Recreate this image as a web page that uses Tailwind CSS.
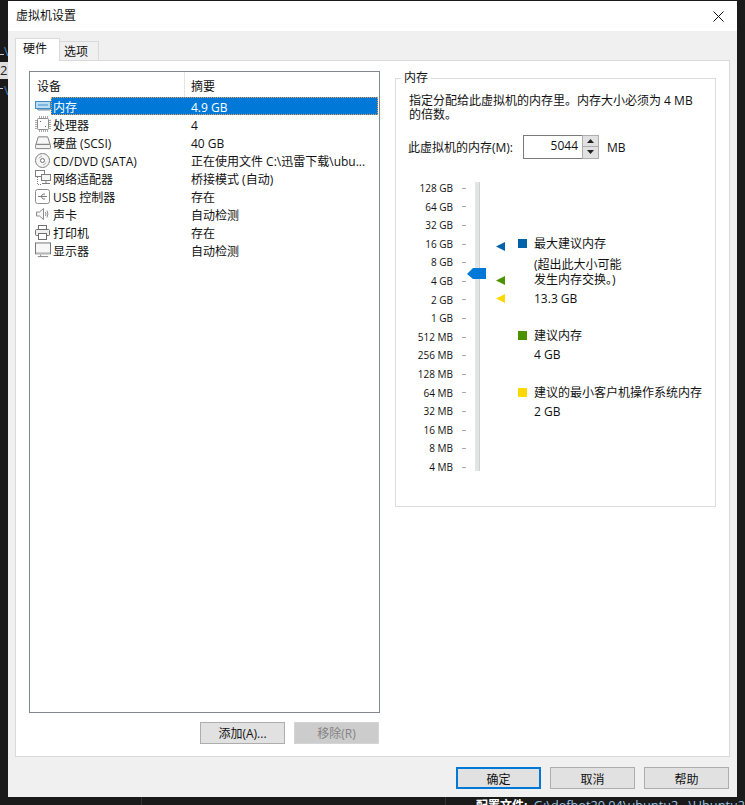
<!DOCTYPE html>
<html lang="en">
<head>
    <meta charset="UTF-8">
    <meta name="viewport" content="width=device-width, initial-scale=1.0">
    <title>虚拟机设置</title>
    <script src="https://cdn.jsdelivr.net/npm/@tailwindcss/browser@4"></script>
</head>
<body class="bg-[#1a1a1a] h-[805px] w-[745px] overflow-hidden relative font-['Open_Sans','Noto_Sans_CJK_SC',sans-serif] text-[12px] leading-[18px] text-[#111]">

    <!-- bits of the desktop behind the dialog -->
    <div class="absolute left-0 top-[44px] w-[8px] h-[14px] overflow-hidden pl-[4px] text-[#3f7fb5] text-[13px] leading-[14px]">V</div>
    <div class="absolute left-0 top-[54px] w-[4px] h-px bg-[#ccc]"></div>
    <div class="absolute left-0 top-[62px] w-[8px] h-[17px] bg-[#dddddd] overflow-hidden text-[#222] text-[13px] leading-[17px]">2</div>
    <div class="absolute left-0 top-[83px] w-[8px] h-[14px] overflow-hidden pl-[4px] text-[#3f7fb5] text-[13px] leading-[14px]">V</div>
    <div class="absolute left-0 top-[88px] w-[3px] h-px bg-[#ccc]"></div>
    <div class="absolute left-[141px] top-[797px] w-px h-[8px] bg-[#333]"></div>
    <div class="absolute left-[445px] top-[797px] w-px h-[8px] bg-[#333]"></div>
    <div class="absolute left-[476px] top-[797px] w-[269px] h-[8px] overflow-hidden text-[12.7px] leading-[16px] whitespace-nowrap text-[#9cc4e4]"><b class="text-white text-[12px] mr-[3px]">配置文件:</b> G:\dofbot20.04\ubuntu2...\Ubuntu20</div>

    <!-- window -->
    <div class="absolute left-[8px] top-[1px] w-[729px] h-[796px] bg-[#f0f0f0] flex flex-col">
        <div class="h-[30px] bg-white flex items-center justify-between pl-[8px] pr-[13px] shrink-0">
            <span>虚拟机设置</span>
            <svg width="11" height="11" viewBox="0 0 11 11" fill="none" stroke="#111" stroke-width="1"><path d="M0.5 0.5L10.5 10.5M10.5 0.5L0.5 10.5"/></svg>
        </div>

        <!-- tabs -->
        <div class="flex items-end pl-[7px] h-[30px] shrink-0 relative z-10">
            <div class="w-[45px] h-[23px] bg-white border border-[#d9d9d9] border-b-0 pl-[7px] pt-[1px]">硬件</div>
            <div class="w-[39px] h-[19px] mb-[1px] bg-[#f0f0f0] border border-[#d9d9d9] border-l-0 border-b-0 pl-[4px] leading-[19px]">选项</div>
        </div>

        <div class="mx-[7px] h-[697px] bg-white border border-[#d9d9d9] -mt-[1px] flex pl-[13px] pt-[10px] gap-[15px]">
            <!-- left column -->
            <div class="w-[351px] flex flex-col">
                <div class="h-[642px] border border-[#828790] bg-white flex flex-col leading-[21px]">
                    <div class="flex h-[25px] shrink-0 items-center">
                        <div class="w-[155px] h-full pl-[7px] border-r border-[#e5e5e5] leading-[29px]">设备</div>
                        <div class="pl-[6px] leading-[29px] h-full">摘要</div>
                    </div>

                    <div class="flex h-[18px]">
                        <div class="w-[21px] flex items-center pl-[5px]"><svg width="16" height="10" viewBox="0 0 16 10"><rect x="0.5" y="0.5" width="15" height="7" fill="#bcdcf3" stroke="#3d8cc6"/><path d="M3 3h10v2H3z" fill="#7fb6e0"/><path d="M2 8.5H16" stroke="#8ea7b8"/><path d="M3 9.5H15" stroke="#c4ccd2"/></svg></div>
                        <div class="w-[327px] flex bg-[#0078d7] text-white outline-1 -outline-offset-1 outline-dotted outline-[#e8a04c]">
                            <div class="w-[140px] pl-[2px]">内存</div><div>4.9 GB</div>
                        </div>
                    </div>
                    <div class="flex h-[18px]">
                        <div class="w-[21px] flex items-center pl-[5px]"><svg width="16" height="16" viewBox="0 0 16 16" fill="none"><rect x="2.5" y="2.5" width="11" height="11" rx="1" fill="#fbfbfb" stroke="#8c8c8c"/><path d="M4.5 0V2M6.5 0V2M8.5 0V2M10.5 0V2M12.5 0V2M4.5 14V16M6.5 14V16M8.5 14V16M10.5 14V16M12.5 14V16M0 4.5H2M0 6.5H2M0 8.5H2M0 10.5H2M0 12.5H2M14 4.5H16M14 6.5H16M14 8.5H16M14 10.5H16M14 12.5H16" stroke="#a8a8a8"/><path d="M5 5h1v1H5zM10 10h1v1h-1z" fill="#666"/></svg></div>
                        <div class="w-[140px] pl-[2px]">处理器</div><div>4</div>
                    </div>
                    <div class="flex h-[18px]">
                        <div class="w-[21px] flex items-center pl-[5px]"><svg width="17" height="15" viewBox="0 0 17 15" fill="none"><path d="M3.5 1.5H13.5L16 9.5H1Z" fill="#f7f7f7" stroke="#7a7a7a"/><rect x="0.5" y="9.5" width="16" height="4.5" rx="1" fill="#f2f2f2" stroke="#7a7a7a"/></svg></div>
                        <div class="w-[140px] pl-[2px]">硬盘 (SCSI)</div><div>40 GB</div>
                    </div>
                    <div class="flex h-[18px]">
                        <div class="w-[21px] flex items-center pl-[5px]"><svg width="15" height="15" viewBox="0 0 15 15" fill="none"><circle cx="7.5" cy="7.5" r="7" fill="#f5f5f5" stroke="#808080"/><path d="M4 5.5A4.5 4.5 0 0 1 7 3M11 9.5A4.5 4.5 0 0 1 8 12" stroke="#b0b0b0"/><circle cx="7.5" cy="7.5" r="2" fill="#fff" stroke="#6e6e6e"/></svg></div>
                        <div class="w-[140px] pl-[2px]">CD/DVD (SATA)</div><div class="whitespace-nowrap">正在使用文件 C:\迅雷下载\ubu...</div>
                    </div>
                    <div class="flex h-[18px]">
                        <div class="w-[21px] flex items-center pl-[5px]"><svg width="16" height="16" viewBox="0 0 16 16" fill="none" stroke="#7d7d7d"><rect x="0.5" y="0.5" width="9" height="6" fill="#fff"/><rect x="6.5" y="4.5" width="9" height="6" fill="#f4f4f4"/><path d="M11 10.5V13M7 13.5H15"/><path d="M2.5 7V14.5H6" stroke-dasharray="1 1"/></svg></div>
                        <div class="w-[140px] pl-[2px]">网络适配器</div><div>桥接模式 (自动)</div>
                    </div>
                    <div class="flex h-[18px]">
                        <div class="w-[21px] flex items-center pl-[5px]"><svg width="15" height="15" viewBox="0 0 15 15" fill="none"><rect x="0.5" y="0.5" width="14" height="14" rx="2" fill="#fff" stroke="#8c8c8c"/><path d="M3 7.5H12M6 7.5L8 5H10M6 7.5L8 10H10" stroke="#7a7a7a"/></svg></div>
                        <div class="w-[140px] pl-[2px]">USB 控制器</div><div>存在</div>
                    </div>
                    <div class="flex h-[18px]">
                        <div class="w-[21px] flex items-center pl-[6px]"><svg width="13" height="14" viewBox="0 0 13 14" fill="none" stroke="#8c8c8c"><path d="M0.5 5H3.5L7.5 1.5V12.5L3.5 9H0.5Z" fill="#f6f6f6"/><path d="M9.5 5Q10.5 7 9.5 9M11 3.5Q12.8 7 11 10.5"/></svg></div>
                        <div class="w-[140px] pl-[2px]">声卡</div><div>自动检测</div>
                    </div>
                    <div class="flex h-[18px]">
                        <div class="w-[21px] flex items-center pl-[5px]"><svg width="15" height="15" viewBox="0 0 15 15" fill="none" stroke="#6e6e6e"><rect x="3.5" y="0.5" width="8" height="4" fill="#fff"/><rect x="0.5" y="4.5" width="14" height="6" rx="1" fill="#f0f0f0"/><rect x="3.5" y="8.5" width="8" height="6" fill="#fff"/></svg></div>
                        <div class="w-[140px] pl-[2px]">打印机</div><div>存在</div>
                    </div>
                    <div class="flex h-[18px]">
                        <div class="w-[21px] flex items-center pl-[5px]"><svg width="17" height="16" viewBox="0 0 17 16" fill="none"><rect x="0.5" y="0.5" width="16" height="11.5" fill="#f7f7f7" stroke="#707070"/><path d="M1 11.5H16" stroke="#b8b8b8" stroke-width="2"/><path d="M6 13V14.5M3 15H14" stroke="#808080"/></svg></div>
                        <div class="w-[140px] pl-[2px]">显示器</div><div>自动检测</div>
                    </div>
                </div>

                <div class="flex justify-end gap-[9px] mt-[9px] pr-[1px]">
                    <div class="w-[85px] h-[22px] bg-[#e1e1e1] border border-[#adadad] text-center leading-[22px]">添加(A)...</div>
                    <div class="w-[85px] h-[22px] bg-[#cccccc] border border-[#d4d4d4] text-[#838383] text-center leading-[22px]">移除(R)</div>
                </div>
            </div>

            <!-- memory group -->
            <div class="w-[321px] h-[429px] mt-[7px] border border-[#dcdcdc] relative">
                <span class="absolute left-[5px] -top-[8px] bg-white px-[3px] leading-[14px]">内存</span>
                <div class="pl-[13px] pt-[15px] pr-[10px] leading-[14px]">指定分配给此虚拟机的内存里。内存大小必须为 4 MB<br>的倍数。</div>
                <div class="flex items-center pl-[12px] mt-[13px] h-[23px]">
                    <div class="w-[115px] pt-[2px]">此虚拟机的内存(M):</div>
                    <div class="w-[76px] h-[24px] flex border border-[#7a7a7a] bg-white">
                        <div class="flex-1 text-right pr-[4px] leading-[20px]">5044</div>
                        <div class="w-[17px] -my-px -mr-px border border-[#adadad] bg-[#f0f0f0] flex flex-col">
                            <div class="flex-1 border-b border-[#adadad] bg-[#e1e1e1] flex items-center justify-center"><svg width="7" height="4" viewBox="0 0 7 4"><path d="M3.5 0L7 4H0Z" fill="#222"/></svg></div>
                            <div class="flex-1 bg-[#e1e1e1] flex items-center justify-center"><svg width="7" height="4" viewBox="0 0 7 4"><path d="M0 0H7L3.5 4Z" fill="#222"/></svg></div>
                        </div>
                    </div>
                    <div class="ml-[8px] pt-[2px]">MB</div>
                </div>

                <div class="flex mt-[21px]">
                    <!-- scale labels -->
                    <div class="w-[57px] flex flex-col items-end text-[10px] leading-[18.6px]">
                        <div>128 GB</div><div>64 GB</div><div>32 GB</div><div>16 GB</div><div>8 GB</div><div>4 GB</div><div>2 GB</div><div>1 GB</div><div>512 MB</div><div>256 MB</div><div>128 MB</div><div>64 MB</div><div>32 MB</div><div>16 MB</div><div>8 MB</div><div>4 MB</div>
                    </div>
                    <!-- ticks -->
                    <div class="w-[25px] ml-[9px] relative flex flex-col items-start">
                        <div class="h-[18.6px] w-full flex items-center"><i class="block w-[4px] h-px bg-[#aaa]"></i></div>
                        <div class="h-[18.6px] w-full flex items-center"><i class="block w-[4px] h-px bg-[#aaa]"></i></div>
                        <div class="h-[18.6px] w-full flex items-center"><i class="block w-[4px] h-px bg-[#aaa]"></i></div>
                        <div class="h-[18.6px] w-full flex items-center"><i class="block w-[4px] h-px bg-[#aaa]"></i></div>
                        <div class="h-[18.6px] w-full flex items-center"><i class="block w-[4px] h-px bg-[#aaa]"></i></div>
                        <div class="h-[18.6px] w-full flex items-center"><i class="block w-[4px] h-px bg-[#aaa]"></i></div>
                        <div class="h-[18.6px] w-full flex items-center"><i class="block w-[4px] h-px bg-[#aaa]"></i></div>
                        <div class="h-[18.6px] w-full flex items-center"><i class="block w-[4px] h-px bg-[#aaa]"></i></div>
                        <div class="h-[18.6px] w-full flex items-center"><i class="block w-[4px] h-px bg-[#aaa]"></i></div>
                        <div class="h-[18.6px] w-full flex items-center"><i class="block w-[4px] h-px bg-[#aaa]"></i></div>
                        <div class="h-[18.6px] w-full flex items-center"><i class="block w-[4px] h-px bg-[#aaa]"></i></div>
                        <div class="h-[18.6px] w-full flex items-center"><i class="block w-[4px] h-px bg-[#aaa]"></i></div>
                        <div class="h-[18.6px] w-full flex items-center"><i class="block w-[4px] h-px bg-[#aaa]"></i></div>
                        <div class="h-[18.6px] w-full flex items-center"><i class="block w-[4px] h-px bg-[#aaa]"></i></div>
                        <div class="h-[18.6px] w-full flex items-center"><i class="block w-[4px] h-px bg-[#aaa]"></i></div>
                        <div class="h-[18.6px] w-full flex items-center"><i class="block w-[4px] h-px bg-[#aaa]"></i></div>
                        <!-- track, thumb and markers sit over the scale -->
                        <div class="absolute left-[13px] top-[3px] w-[5px] h-[289px] bg-[#e3e5e4] border-r border-[#d0d0d0]"></div>
                        <svg class="absolute left-[5px] top-[89px]" width="20" height="12" viewBox="0 0 20 12"><path d="M0 6L6 0H19V11H6Z" fill="#0078d7"/></svg>
                        <svg class="absolute left-[34px] top-[63px]" width="9" height="9" viewBox="0 0 9 9"><path d="M0 4.5L9 0V9Z" fill="#0062a8"/></svg>
                        <svg class="absolute left-[34px] top-[97px]" width="9" height="9" viewBox="0 0 9 9"><path d="M0 4.5L9 0V9Z" fill="#4b9200"/></svg>
                        <svg class="absolute left-[34px] top-[115px]" width="9" height="9" viewBox="0 0 9 9"><path d="M0 4.5L9 0V9Z" fill="#ffd800"/></svg>
                    </div>
                    <!-- legend -->
                    <div class="ml-[31px] flex flex-col">
                        <div class="flex items-center h-[18px] mt-[56px]"><i class="block w-[9px] h-[9px] bg-[#0062a8] mr-[7px] -mt-[2px]"></i>最大建议内存</div>
                        <div class="pl-[16px] mt-[4px] leading-[15px]">(超出此大小可能<br>发生内存交换。)</div>
                        <div class="pl-[16px] mt-[3px]">13.3 GB</div>
                        <div class="flex items-center h-[18px] mt-[19px]"><i class="block w-[9px] h-[9px] bg-[#4b9200] mr-[7px] -mt-[2px]"></i>建议内存</div>
                        <div class="pl-[16px] mt-[1px]">4 GB</div>
                        <div class="flex items-center h-[18px] mt-[20px]"><i class="block w-[9px] h-[9px] bg-[#ffd800] mr-[7px] -mt-[2px]"></i>建议的最小客户机操作系统内存</div>
                        <div class="pl-[16px] mt-[1px]">2 GB</div>
                    </div>
                </div>
            </div>
        </div>

        <!-- dialog buttons -->
        <div class="flex justify-end gap-[9px] pr-[8px] mt-[10px]">
            <div class="w-[85px] h-[22px] bg-[#e1e1e1] border-2 border-[#0078d7] text-center leading-[21px]">确定</div>
            <div class="w-[85px] h-[22px] bg-[#e1e1e1] border border-[#adadad] text-center leading-[23px]">取消</div>
            <div class="w-[85px] h-[22px] bg-[#e1e1e1] border border-[#adadad] text-center leading-[23px]">帮助</div>
        </div>
    </div>
</body>
</html>
